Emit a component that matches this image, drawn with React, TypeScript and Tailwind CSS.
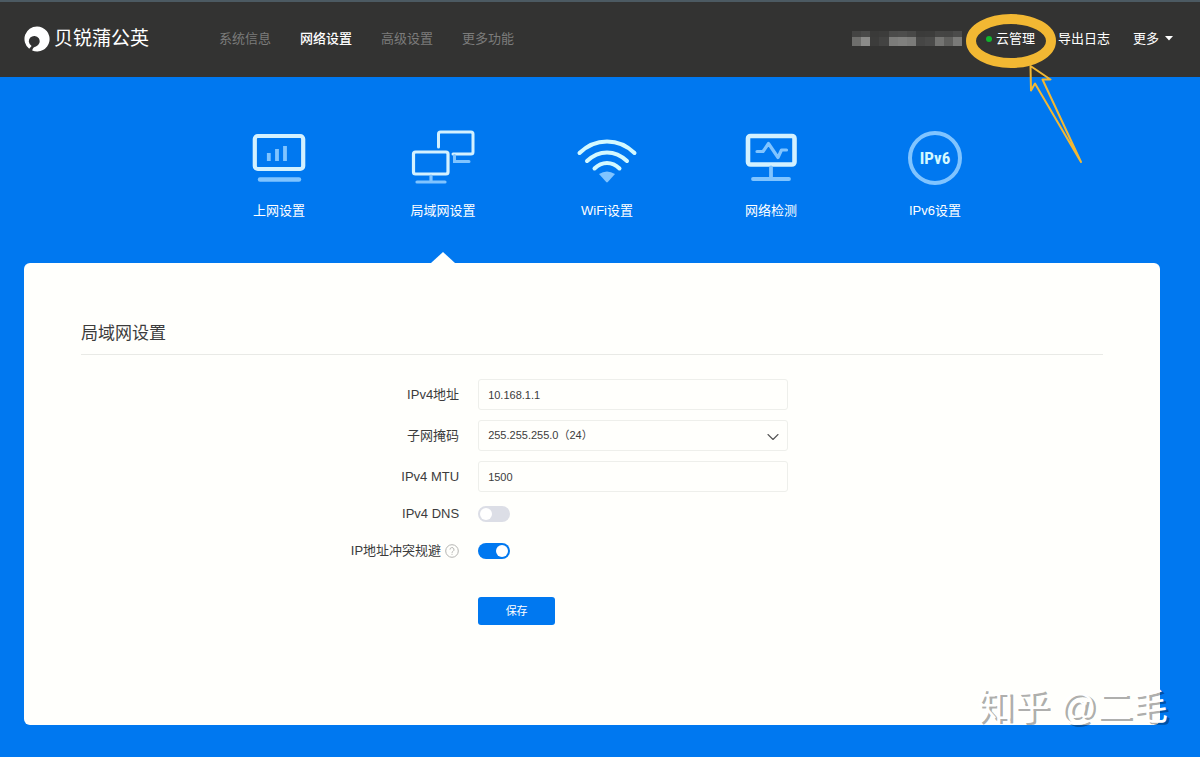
import { useState } from 'react';
import type { ReactNode } from 'react';
import { ChevronDown } from 'lucide-react';

const NAV_ITEMS = ['系统信息', '网络设置', '高级设置', '更多功能'];

// Pixelated device name, one entry per block
const MASK_TOP = ['#444443', '#4a4a49', '#3a3a39', '#3c3c3b', '#4b4b4a', '#4d4d4c', '#484847', '#3b3b3a', '#3c3c3b', '#454544', '#444443', '#4b4b4a'];
const MASK_BOTTOM = ['#6e6e6c', '#8b8b89', '#3c3c3b', '#434342', '#7c7c7a', '#80807e', '#7b7b79', '#464645', '#4a4a49', '#747472', '#5f5f5d', '#7a7a78'];

function LogoMark() {
  return (
    <svg className="h-[26px] w-[26px]" viewBox="0 0 26 26" aria-hidden="true">
      <path
        fill="#fff"
        d="M13 0.5A12.5 12.5 0 0 0 5.2 22.8L7.6 20A5.4 5.4 0 1 1 12 20.4Q8.8 20.8 8.2 24.5A12.5 12.5 0 1 0 13 0.5Z"
      />
    </svg>
  );
}

function WanIcon() {
  return (
    <svg className="h-14 w-16" viewBox="0 0 64 56" fill="none" aria-hidden="true">
      <rect x="7.8" y="6" width="48.4" height="33" rx="3" stroke="#d3f1ff" strokeWidth="4.2" />
      <path d="M21.8 31v-8M30 31V19M38 31V16" stroke="#80c4ff" strokeWidth="3.8" />
      <path d="M13 49.5h39" stroke="#80c4ff" strokeWidth="4.4" strokeLinecap="round" />
    </svg>
  );
}

function LanIcon() {
  return (
    <svg className="h-14 w-16" viewBox="0 0 64 56" fill="none" aria-hidden="true">
      <path d="M27.5 17V4a2 2 0 0 1 2-2H60a2 2 0 0 1 2 2v18a2 2 0 0 1-2 2H42" stroke="#d3f1ff" strokeWidth="3" strokeLinecap="round" />
      <path d="M43.5 25.5v6H58" stroke="#80c4ff" strokeWidth="3" strokeLinecap="round" />
      <rect x="2.5" y="22" width="34.5" height="22" rx="2" stroke="#d3f1ff" strokeWidth="3.2" />
      <path d="M20 46v5M6 52h28" stroke="#80c4ff" strokeWidth="3.2" strokeLinecap="round" />
    </svg>
  );
}

function WifiIcon() {
  return (
    <svg className="h-14 w-16" viewBox="0 0 64 56" fill="none" aria-hidden="true">
      <g stroke="#d3f9ff" strokeWidth="4" strokeLinecap="round">
        <path d="M4.5 23C20 7.5 44 7.5 59.500 23" />
        <path d="M12 31C24 19.5 40 19.5 52 31" />
        <path d="M19.5 38.5C27 31 37 31 44.5 38.5" />
      </g>
      <path d="M24 44q8-5 16 0l-7.2 8q-.8.8-1.6 0Z" fill="#80c4ff" />
    </svg>
  );
}

function DetectIcon() {
  return (
    <svg className="h-14 w-16" viewBox="0 0 64 56" fill="none" aria-hidden="true">
      <rect x="9" y="6" width="46.5" height="28.5" rx="2.5" stroke="#d3f1ff" strokeWidth="4.6" />
      <path d="M18 21.500h6l5.5-8 9.5 14 3.5-7.500h5" stroke="#80c4ff" strokeWidth="3.2" strokeLinecap="round" strokeLinejoin="round" />
      <path d="M32 37.500v10M14 49h36" stroke="#80c4ff" strokeWidth="3.8" strokeLinecap="round" />
    </svg>
  );
}

function Ipv6Icon() {
  return (
    <span className="flex h-14 w-14 items-center justify-center">
      <span className="flex h-[54px] w-[54px] items-center justify-center rounded-full border-4 border-[#80c4ff] font-['Liberation_Sans_Narrow','Roboto_Condensed','Liberation_Sans',sans-serif] text-[17px] font-bold text-[#d3f9ff]">
        IPv6
      </span>
    </span>
  );
}

const TABS = [
  { name: '上网设置', icon: <WanIcon /> },
  { name: '局域网设置', icon: <LanIcon /> },
  { name: 'WiFi设置', icon: <WifiIcon /> },
  { name: '网络检测', icon: <DetectIcon /> },
  { name: 'IPv6设置', icon: <Ipv6Icon /> },
];

function FormRow({ id, label, children, extra }: { id: string; label: string; children: ReactNode; extra?: ReactNode }) {
  return (
    <div className="flex items-center gap-[19px]">
      <div className="flex w-[37%] shrink-0 items-center justify-end gap-1">
        <label htmlFor={id} className="text-[13px] leading-5 text-[#3c3c3c]">{label}</label>
        {extra}
      </div>
      <div className="w-full max-w-[310px]">{children}</div>
    </div>
  );
}

function Toggle({ id, checked, onChange }: { id: string; checked: boolean; onChange: (v: boolean) => void }) {
  return (
    <span className="relative flex h-4 w-8">
      <input
        id={id}
        type="checkbox"
        checked={checked}
        onChange={(e) => onChange(e.target.checked)}
        className="peer h-4 w-8 cursor-pointer appearance-none rounded-full bg-[#dcdee6] checked:bg-[#0078f0]"
      />
      <span className="pointer-events-none absolute top-[2px] left-[2px] h-3 w-3 rounded-full bg-white peer-checked:left-[18px]" />
    </span>
  );
}

const fieldClass =
  'block h-[31px] w-full rounded-[3px] border border-[#eeefeb] bg-[#fffffc] px-[9px] text-[11px] text-[#3c3c3c] outline-none';

export default function App() {
  const [tab, setTab] = useState('局域网设置');
  const [address, setAddress] = useState('10.168.1.1');
  const [mask, setMask] = useState('24');
  const [mtu, setMtu] = useState('1500');
  const [dns, setDns] = useState(false);
  const [avoid, setAvoid] = useState(true);

  return (
    <div className="flex min-h-screen flex-col bg-[#0078f0] font-['Liberation_Sans','Noto_Sans_CJK_SC',sans-serif]">
      <header className="flex h-[77px] items-center border-t-2 border-[#4c5a62] bg-[#333332] pr-[27px] pb-[2px] pl-6 text-[13px]">
        <a href="#" className="flex items-center gap-1 text-[19px] leading-6 text-white">
          <LogoMark />
          贝锐蒲公英
        </a>

        <nav className="ml-[70px] flex gap-[29px]">
          {NAV_ITEMS.map((item) => (
            <a
              key={item}
              href="#"
              className={item === '网络设置' ? 'font-medium text-white' : 'text-[#7c7c7b]'}
            >
              {item}
            </a>
          ))}
        </nav>

        <div className="ml-auto flex items-center gap-[23px] text-white">
          <div className="flex items-center gap-6">
            <div className="w-[110px]" aria-hidden="true">
              {[MASK_TOP, MASK_BOTTOM].map((row, i) => (
                <div key={i} className={i === 0 ? 'flex h-[6px]' : 'flex h-[9px]'}>
                  {row.map((color, j) => (
                    <span key={j} className="flex-1" style={{ backgroundColor: color }} />
                  ))}
                </div>
              ))}
            </div>
            <a href="#" className="relative flex items-center gap-1">
              <span className="h-[6px] w-[6px] rounded-full bg-[#10b52c]" />
              云管理
              {/* Highlight ring and pointer */}
              <svg
                className="pointer-events-none absolute -top-4 -left-6 z-10 h-[154px] w-[120px]"
                viewBox="0 0 120 154"
                fill="none"
                aria-hidden="true"
              >
                <ellipse cx="49" cy="28" rx="40" ry="22" stroke="#f2b833" strokeWidth="10" />
                <path
                  d="M68.5 53l20 13.500h-8L119 149 73 70.500l-4 7Z"
                  stroke="#f2b833"
                  strokeWidth="2"
                  strokeLinejoin="round"
                />
              </svg>
            </a>
          </div>
          <a href="#">导出日志</a>
          <button type="button" className="flex items-center gap-[6px]">
            更多
            <svg className="h-[5px] w-2" viewBox="0 0 8 5" aria-hidden="true">
              <path d="M0 0h8L4 4.5Z" fill="#fff" />
            </svg>
          </button>
        </div>
      </header>

      <div className="flex justify-center pt-[53px] pl-[14px]">
        {TABS.map((t) => (
          <button
            key={t.name}
            type="button"
            onClick={() => setTab(t.name)}
            className="flex w-[164px] flex-col items-center text-[13px] leading-5 text-white"
          >
            {t.icon}
            <span className="mt-[15px]">{t.name}</span>
            <svg
              className={t.name === tab ? 'mt-[31px] h-[11px] w-6' : 'invisible mt-[31px] h-[11px] w-6'}
              viewBox="0 0 24 11"
              aria-hidden="true"
            >
              <path d="M0 11L12 0l12 11Z" fill="#fffffc" />
            </svg>
          </button>
        ))}
      </div>

      <main className="mr-10 mb-8 ml-6 flex-1 rounded-md bg-[#fffffc] px-[57px] pt-[57px]">
        <h1 className="border-b border-[#e9eae6] pb-[7px] text-[17px] leading-[27px] text-[#3c3c3c]">局域网设置</h1>

        <form className="mt-6 flex flex-col" onSubmit={(e) => e.preventDefault()}>
          <div className="flex flex-col gap-[10px]">
            <FormRow id="address" label="IPv4地址">
              <input id="address" className={fieldClass} value={address} onChange={(e) => setAddress(e.target.value)} />
            </FormRow>
            <FormRow id="mask" label="子网掩码">
              <div className="relative">
                <select
                  id="mask"
                  className={`${fieldClass} appearance-none`}
                  value={mask}
                  onChange={(e) => setMask(e.target.value)}
                >
                  <option value="24">255.255.255.0（24）</option>
                </select>
                <ChevronDown className="pointer-events-none absolute top-[7px] right-[5px] h-5 w-5 text-[#555]" strokeWidth={1.3} />
              </div>
            </FormRow>
            <FormRow id="mtu" label="IPv4 MTU">
              <input id="mtu" className={fieldClass} value={mtu} onChange={(e) => setMtu(e.target.value)} />
            </FormRow>
          </div>

          <div className="mt-3 flex flex-col gap-[17px]">
            <FormRow id="dns" label="IPv4 DNS">
              <Toggle id="dns" checked={dns} onChange={setDns} />
            </FormRow>
            <FormRow
              id="avoid"
              label="IP地址冲突规避"
              extra={
                <svg className="h-[14px] w-[14px]" viewBox="0 0 14 14" fill="none" stroke="#b5b5b2" aria-hidden="true">
                  <circle cx="7" cy="7" r="6.3" />
                  <path d="M5 5.6a2 2 0 1 1 3 1.7q-1 .6-1 1.5M7 9.8v1" />
                </svg>
              }
            >
              <Toggle id="avoid" checked={avoid} onChange={setAvoid} />
            </FormRow>
          </div>

          <div className="mt-9 flex gap-[19px]">
            <div className="w-[37%] shrink-0" />
            <button type="submit" className="h-7 w-[77px] rounded-[3px] bg-[#0078f0] text-[11px] text-white">
              保存
            </button>
          </div>
        </form>
      </main>

      <div className="pointer-events-none absolute right-8 bottom-6 text-[36px] leading-[50px] text-white [text-shadow:3px_2px_0_rgba(0,0,0,0.33)]">
        知乎 @二毛
      </div>
    </div>
  );
}
